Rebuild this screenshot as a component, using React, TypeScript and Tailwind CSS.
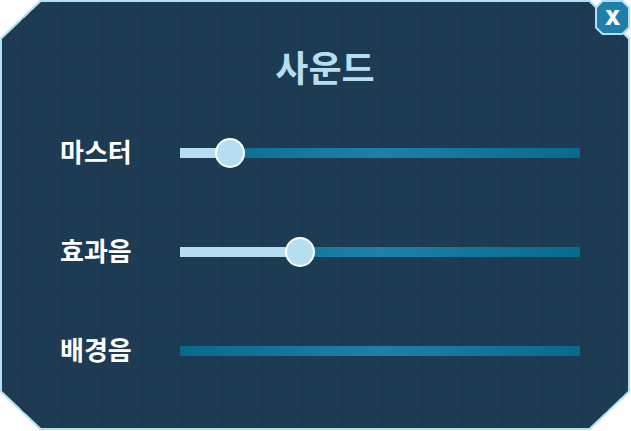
import { useState } from "react";

type Channel = { id: string; label: string; value: number };

const initialChannels: Channel[] = [
  { id: "master", label: "마스터", value: 19 },
  { id: "effects", label: "효과음", value: 57 },
  { id: "music", label: "배경음", value: 0 },
];

const MAX = 200;
const THUMB = 30;

function VolumeRow({ channel, onChange }: { channel: Channel; onChange: (value: number) => void }) {
  const ratio = channel.value / MAX;
  const fill = ratio === 0 ? "0px" : `calc(${THUMB / 2}px + (100% - ${THUMB}px) * ${ratio})`;
  return (
    <div className="flex h-[30px] items-center">
      <label htmlFor={channel.id} className="w-[120px] shrink-0 pb-1 text-[26px] leading-[30px] font-bold text-white">
        {channel.label}
      </label>
      <div className="relative flex h-[30px] min-w-0 flex-1 items-center">
        <div className="h-[10px] w-full bg-linear-to-r from-[#056b8b] via-[#1c80ab] to-[#056b8b]">
          <div className="h-full bg-[#b5dff0]" style={{ width: fill }} />
        </div>
        <input
          id={channel.id}
          type="range"
          min={0}
          max={MAX}
          value={channel.value}
          onChange={(e) => onChange(Number(e.target.value))}
          className={`absolute inset-0 m-0 h-[30px] w-full cursor-pointer appearance-none bg-transparent [&::-webkit-slider-thumb]:size-[30px] [&::-webkit-slider-thumb]:appearance-none [&::-webkit-slider-thumb]:rounded-full [&::-webkit-slider-thumb]:border-2 [&::-webkit-slider-thumb]:border-solid [&::-webkit-slider-thumb]:border-white [&::-webkit-slider-thumb]:bg-[#b5dff0] ${
            channel.value === 0 ? "[&::-webkit-slider-thumb]:opacity-0" : ""
          }`}
        />
      </div>
    </div>
  );
}

export default function App() {
  const [channels, setChannels] = useState(initialChannels);

  return (
    <main className="bg-white pr-px pb-px font-['Noto_Sans_CJK_KR','Liberation_Sans',sans-serif]">
      <section className="relative">
        <div className="bg-[#b2dff2] p-[2px] [clip-path:polygon(40px_0,calc(100%_-_40px)_0,100%_38px,100%_calc(100%_-_38px),calc(100%_-_40px)_100%,40px_100%,0_calc(100%_-_38px),0_38px)]">
          <div className="bg-[#1e3b54] bg-[linear-gradient(90deg,#1d3951_3px,transparent_3px),linear-gradient(#1d3951_3px,transparent_3px)] bg-size-[40px_40px] bg-position-[19px_8px] pt-[40px] pr-[48px] pb-[62px] pl-[58px] [clip-path:polygon(39px_0,calc(100%_-_39px)_0,100%_37px,100%_calc(100%_-_37px),calc(100%_-_39px)_100%,39px_100%,0_calc(100%_-_37px),0_37px)]">
            <h1 className="pl-[10px] text-center text-[36px] leading-[48px] font-bold text-[#b5dff0]">사운드</h1>
            <div className="flex flex-col gap-[69px] pt-[48px]">
              {channels.map((channel) => (
                <VolumeRow
                  key={channel.id}
                  channel={channel}
                  onChange={(value) =>
                    setChannels((prev) => prev.map((c) => (c.id === channel.id ? { ...c, value } : c)))
                  }
                />
              ))}
            </div>
          </div>
        </div>
        <button
          type="button"
          className="absolute top-0 right-0 size-[35px] cursor-pointer bg-[#b2dff2] p-[2px] [clip-path:polygon(7px_0,calc(100%_-_7px)_0,100%_7px,100%_calc(100%_-_7px),calc(100%_-_7px)_100%,7px_100%,0_calc(100%_-_7px),0_7px)]"
        >
          <span className="flex size-full items-center justify-center bg-[#1c80ab] font-['Inter'] text-[20px] leading-none font-black text-white [clip-path:polygon(6px_0,calc(100%_-_6px)_0,100%_6px,100%_calc(100%_-_6px),calc(100%_-_6px)_100%,6px_100%,0_calc(100%_-_6px),0_6px)]">
            X
          </span>
        </button>
      </section>
    </main>
  );
}
